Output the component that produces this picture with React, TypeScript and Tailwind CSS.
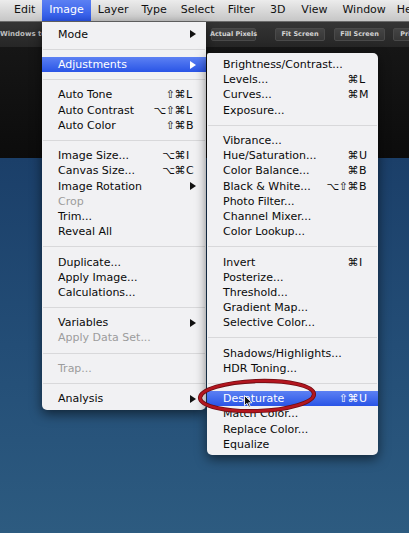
import React from 'react';

type Item =
  | { sep: true }
  | { sep?: false; label: string; mods?: string; k?: string; arrow?: boolean; disabled?: boolean; active?: boolean };

const imageMenu: Item[] = [
  { label: 'Mode', arrow: true },
  { sep: true },
  { label: 'Adjustments', arrow: true, active: true },
  { sep: true },
  { label: 'Auto Tone', mods: '⇧⌘', k: 'L' },
  { label: 'Auto Contrast', mods: '⌥⇧⌘', k: 'L' },
  { label: 'Auto Color', mods: '⇧⌘', k: 'B' },
  { sep: true },
  { label: 'Image Size...', mods: '⌥⌘', k: 'I' },
  { label: 'Canvas Size...', mods: '⌥⌘', k: 'C' },
  { label: 'Image Rotation', arrow: true },
  { label: 'Crop', disabled: true },
  { label: 'Trim...' },
  { label: 'Reveal All' },
  { sep: true },
  { label: 'Duplicate...' },
  { label: 'Apply Image...' },
  { label: 'Calculations...' },
  { sep: true },
  { label: 'Variables', arrow: true },
  { label: 'Apply Data Set...', disabled: true },
  { sep: true },
  { label: 'Trap...', disabled: true },
  { sep: true },
  { label: 'Analysis', arrow: true },
];

const adjustMenu: Item[] = [
  { label: 'Brightness/Contrast...' },
  { label: 'Levels...', mods: '⌘', k: 'L' },
  { label: 'Curves...', mods: '⌘', k: 'M' },
  { label: 'Exposure...' },
  { sep: true },
  { label: 'Vibrance...' },
  { label: 'Hue/Saturation...', mods: '⌘', k: 'U' },
  { label: 'Color Balance...', mods: '⌘', k: 'B' },
  { label: 'Black & White...', mods: '⌥⇧⌘', k: 'B' },
  { label: 'Photo Filter...' },
  { label: 'Channel Mixer...' },
  { label: 'Color Lookup...' },
  { sep: true },
  { label: 'Invert', mods: '⌘', k: 'I' },
  { label: 'Posterize...' },
  { label: 'Threshold...' },
  { label: 'Gradient Map...' },
  { label: 'Selective Color...' },
  { sep: true },
  { label: 'Shadows/Highlights...' },
  { label: 'HDR Toning...' },
  { sep: true },
  { label: 'Desaturate', mods: '⇧⌘', k: 'U', active: true },
  { label: 'Match Color...' },
  { label: 'Replace Color...' },
  { label: 'Equalize' },
];

const Arrow = ({ white }: { white?: boolean }) => (
  <svg width="6" height="8" viewBox="0 0 6 8" className="shrink-0">
    <polygon points="0,0 6,4 0,8" fill={white ? '#ffffff' : '#111111'} />
  </svg>
);

const MenuRows = ({ items, right }: { items: Item[]; right: string }) => (
  <>
    {items.map((it, i) =>
      it.sep ? (
        <div key={i} className="flex h-[15.2px] items-center px-px">
          <div className="h-px w-full bg-[#d8d8da]" />
        </div>
      ) : (
        <div
          key={i}
          className={`flex h-[15.2px] items-center pl-[16px] ${right} ${
            it.active
              ? 'bg-gradient-to-b from-[#5c80f3] to-[#2a54e6] text-white'
              : it.disabled
              ? 'text-[#9c9c9c]'
              : 'text-[#0a0a0a]'
          }`}
        >
          <span className="flex-1 whitespace-nowrap leading-none">{it.label}</span>
          {it.k && (
            <span className="flex items-center leading-none">
              <span className="tracking-[-0.5px]">{it.mods}</span>
              <span className="ml-[1px] w-[10px]">{it.k}</span>
            </span>
          )}
          {it.arrow && <Arrow white={it.active} />}
        </div>
      )
    )}
  </>
);

const menuBarItems = [
  { label: 'Edit', cls: 'ml-[14px]' },
  { label: 'Image', cls: 'ml-[7px] px-[7px] h-full bg-gradient-to-b from-[#5c80f3] to-[#2a54e6] text-white' },
  { label: 'Layer', cls: 'ml-[7px]' },
  { label: 'Type', cls: 'ml-[13px]' },
  { label: 'Select', cls: 'ml-[14px]' },
  { label: 'Filter', cls: 'ml-[13px]' },
  { label: '3D', cls: 'ml-[15px]' },
  { label: 'View', cls: 'ml-[16px]' },
  { label: 'Window', cls: 'ml-[15px]' },
  { label: 'Help', cls: 'ml-[11px]' },
];

const ToolButton = ({ label, w, cls }: { label: string; w: string; cls: string }) => (
  <div
    className={`${w} ${cls} flex h-[13px] shrink-0 items-center justify-center rounded-[2px] border border-[#4a4a4a] bg-gradient-to-b from-[#444] to-[#363636] text-[6.5px] font-bold whitespace-nowrap text-[#d4d4d4]`}
  >
    {label}
  </div>
);

export default function App() {
  return (
    <div className="relative flex h-[533px] w-[409px] flex-col overflow-hidden font-['DejaVu_Sans',sans-serif] text-[11px]">
      {/* menu bar */}
      <div className="flex h-[22px] shrink-0 items-center border-b border-[#6a6a6a] bg-gradient-to-b from-[#ececec] to-[#c6c6c6] text-[#111]">
        {menuBarItems.map(m => (
          <span key={m.label} className={`flex shrink-0 items-center whitespace-nowrap ${m.cls}`}>
            {m.label}
          </span>
        ))}
      </div>

      {/* options toolbar */}
      <div className="flex h-[25px] shrink-0 items-center overflow-hidden bg-gradient-to-b from-[#353535] to-[#262626]">
        <div className="w-[211px] shrink-0 text-[7px] font-bold whitespace-nowrap text-[#bdbdbd]">
          Windows to
        </div>
        <ToolButton label="Actual Pixels" w="w-[45px]" cls="" />
        <ToolButton label="Fit Screen" w="w-[50px]" cls="ml-[19px]" />
        <ToolButton label="Fill Screen" w="w-[51px]" cls="ml-[9px]" />
        <ToolButton label="Print Size" w="w-[50px]" cls="ml-[8px]" />
      </div>

      {/* app frame */}
      <div className="h-[111px] shrink-0 bg-gradient-to-b from-[#161616] to-[#0c0c0c]" />
      <div className="flex-1 bg-gradient-to-b from-[#1b3f69] via-[#234d76] to-[#2d5b80]" />

      {/* Image menu */}
      <div className="absolute left-[42px] top-[22px] w-[164px] rounded-b-[5px] bg-[#f1f1f3] pt-[4.6px] pb-[4px] shadow-[0_4px_12px_rgba(0,0,0,0.55)]">
        <MenuRows items={imageMenu} right="pr-[10px]" />
      </div>

      {/* Adjustments submenu */}
      <div className="absolute left-[207px] top-[53px] w-[171px] rounded-[5px] rounded-tl-[2px] bg-[#f1f1f3] pt-[4px] pb-[3px] shadow-[0_4px_12px_rgba(0,0,0,0.55)]">
        <MenuRows items={adjustMenu} right="pr-[9px]" />
      </div>

      {/* red annotation */}
      <svg className="pointer-events-none absolute left-[195px] top-[376px]" width="126" height="42" viewBox="0 0 126 42">
        <ellipse cx="62" cy="20" rx="57" ry="15" fill="none" stroke="#6d0d12" strokeWidth="4.2" transform="rotate(-2 62 20)" />
        <ellipse cx="62" cy="20" rx="57" ry="15" fill="none" stroke="#b3161f" strokeWidth="2.6" transform="rotate(-2 62 20)" />
      </svg>

      {/* cursor */}
      <svg className="pointer-events-none absolute left-[244px] top-[395px]" width="9" height="13" viewBox="0 0 9 13">
        <polygon points="0.5,0.5 0.5,10.5 3,8.3 4.8,12.3 6.3,11.6 4.6,7.8 8,7.8" fill="#111" stroke="#fff" strokeWidth="0.9" />
      </svg>
    </div>
  );
}
